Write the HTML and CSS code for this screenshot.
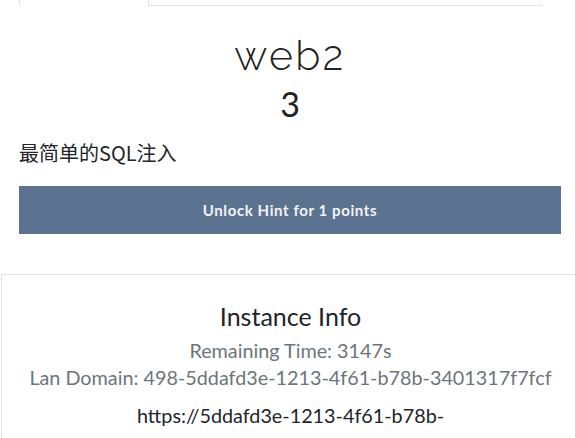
FILE: index.html
```html
<!DOCTYPE html>
<html>
<head>
<meta charset="utf-8">
<link rel="stylesheet" href="styles.css">
</head>
<body>
<div class="tabs">
  <div class="tab"></div>
  <div class="tab-line"></div>
</div>
<div class="challenge">
  <h1 class="name">web2</h1>
  <h2 class="value">3</h2>
  <p class="desc">最简单的SQL注入</p>
  <button class="hint">Unlock Hint for 1 points</button>
</div>
<div class="card">
  <h3 class="card-title">Instance Info</h3>
  <div class="muted first">Remaining Time: 3147s</div>
  <div class="muted">Lan Domain: 498-5ddafd3e-1213-4f61-b78b-3401317f7fcf</div>
  <div class="url">https://5ddafd3e-1213-4f61-b78b-</div>
</div>
</body>
</html>
```
FILE: styles.css
```css
html, body { margin: 0; padding: 0; background: #fff; overflow: hidden; }
body { font-family: Lato, "Noto Sans CJK SC", sans-serif; color: #212529; }
.tabs { display: flex; padding-left: 19px; width: 524px; height: 6px; }
.tab { width: 128px; border-left: 1px solid #dee2e6; border-right: 1px solid #dee2e6; }
.tab-line { flex: 1; border-bottom: 1px solid #dee2e6; }
.challenge { padding: 0 14px 0 19px; }
.name { margin: 26px 0 0; text-align: center; font-family: Raleway, Lato, sans-serif; font-weight: 300; font-size: 41px; line-height: 48px; letter-spacing: 2.3px; color: #222; }
.value { margin: 4px 0 0; text-align: center; font-weight: 400; font-size: 34px; line-height: 40px; color: #222; }
.desc { margin: 16px 0 0; font-family: "Microsoft YaHei", "Noto Sans CJK SC", sans-serif; font-size: 20px; line-height: 26px; color: #212529; letter-spacing: 0; }
.hint { display: block; width: 100%; margin-top: 20px; height: 48px; border: 0; background: #5b7290; color: #f1f3f5; font-family: Lato, sans-serif; font-weight: 700; font-size: 15px; letter-spacing: 0.6px; }
.card { margin: 40px 0 0 1px; border: 1px solid #dee2e6; border-right: 0; border-bottom: 0; padding: 25px 0 10px 4px; text-align: center; }
.card-title { margin: 0; font-weight: 400; font-size: 25px; line-height: 32px; color: #212529; }
.muted { color: #6c757d; font-size: 19.8px; line-height: 27px; }
.muted.first { margin-top: 5px; }
.url { margin-top: 10px; font-size: 19.8px; line-height: 28px; color: #212529; }
```
